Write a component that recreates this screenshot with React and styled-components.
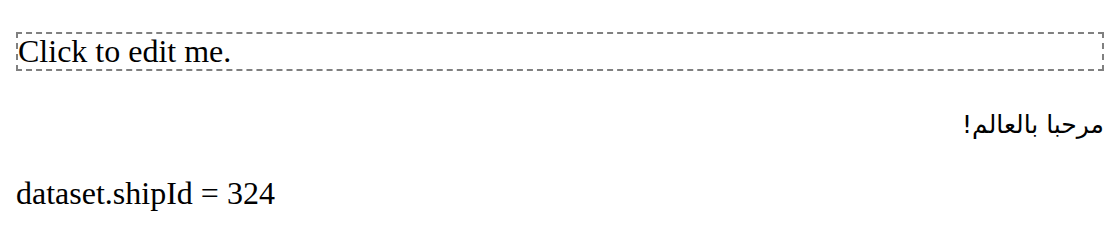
import React from "react";
import styled, { createGlobalStyle } from "styled-components";

const Global = createGlobalStyle`
  body {
    margin: 16px;
    font-family: "Liberation Serif", "Times New Roman", serif;
    font-size: 32px;
    color: #000;
    background: #fff;
  }
`;

const Editable = styled.div`
  margin-top: 16px;
  border: 2px dashed #808080;
  font-size: 32px;
  line-height: 35px;
  outline: none;
`;

const Para = styled.p`
  margin: ${(p) => (p.$sans ? "35px 0 29px" : "32px 0")};
  font-family: ${(p) => (p.$sans ? '"DejaVu Sans", Arial, sans-serif' : 'inherit')};
  font-size: ${(p) => p.$size || 32}px;
  line-height: 37px;
`;

export default function App() {
  return (
    <>
      <Global />
      <Editable contentEditable suppressContentEditableWarning>
        Click to edit me.
      </Editable>
      <Para dir="rtl" $sans $size={25}>مرحبا بالعالم!</Para>
      <Para>dataset.shipId = 324</Para>
    </>
  );
}
